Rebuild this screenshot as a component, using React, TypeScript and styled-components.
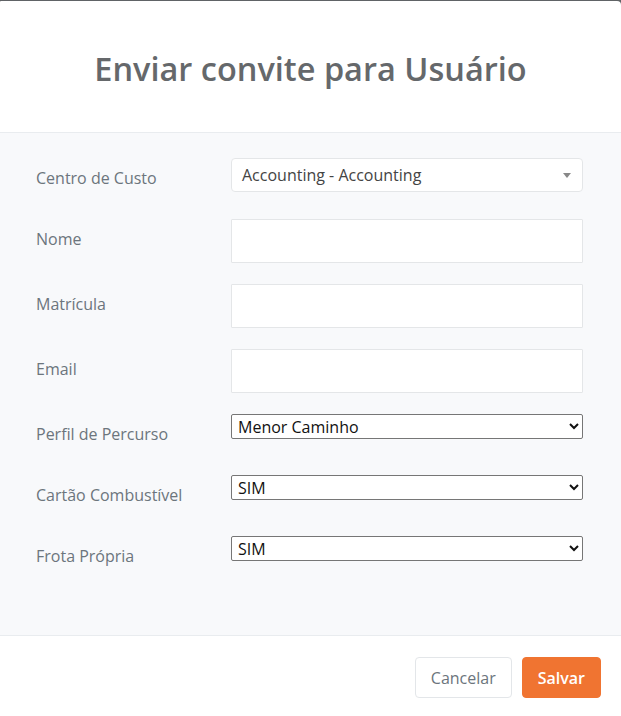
import React from "react";
import styled, { createGlobalStyle } from "styled-components";

const Global = createGlobalStyle`
  html, body { margin: 0; padding: 0; background: #606366; }
  body { font-family: "Open Sans", "Liberation Sans", sans-serif; }
  * { box-sizing: border-box; }
`;

const Modal = styled.div`
  margin-top: 1px;
  width: 621px;
  height: 715px;
  background: #ffffff;
  border-top-right-radius: 4px;
  border-top-left-radius: 1px;
  display: flex;
  flex-direction: column;
  overflow: hidden;
`;

const Header = styled.div`
  height: 132px;
  flex-shrink: 0;
  display: flex;
  align-items: center;
  justify-content: center;
  border-bottom: 1px solid #e9ecef;
  padding-top: 4px;
`;

const Title = styled.h1`
  margin: 0;
  font-size: 32.5px;
  font-weight: 600;
  color: #65686b;
  letter-spacing: 0;
`;

const Body = styled.div`
  background: #f8f9fb;
  padding: 25px 38px 37px 36px;
  display: flex;
  flex-direction: column;
  gap: 21px;
  height: 503px;
  flex-shrink: 0;
  border-bottom: 1px solid #e9ecef;
`;

const Row = styled.div`
  display: grid;
  grid-template-columns: 195px 352px;
  align-items: start;
`;

const Label = styled.label`
  font-size: 16px;
  line-height: 24px;
  padding: 8px 0 8px;
  color: #6c757d;
`;

const FakeSelect = styled.div`
  height: 34px;
  background: #fff;
  border: 1px solid #e4e6e8;
  border-radius: 4px;
  display: flex;
  align-items: center;
  justify-content: space-between;
  padding: 0 10px 0 10px;
  font-size: 16px;
  color: #444;
`;

const Caret = styled.span`
  width: 0;
  height: 0;
  border-left: 4px solid transparent;
  border-right: 4px solid transparent;
  border-top: 5px solid #888;
  margin-right: 1px;
`;

const TextInput = styled.input`
  height: 44px;
  width: 100%;
  background: #fff;
  border: 1px solid #e4e6e8;
  border-radius: 1px;
  font-family: inherit;
  font-size: 16px;
  outline: none;
`;

const NativeSelect = styled.select`
  height: 25px;
  width: 100%;
  font-family: "Open Sans", "Liberation Sans", sans-serif;
  font-size: 16px;
  color: #111;
  background: #fff;
  border: 1px solid #767676;
  border-radius: 2px;
  padding: 0 2px;
`;

const Footer = styled.div`
  flex: 1;
  display: flex;
  justify-content: flex-end;
  align-items: flex-start;
  gap: 10px;
  padding: 21px 20px 0 0;
`;

const Button = styled.button<{ $primary?: boolean }>`
  height: 41px;
  padding: 0 15px;
  font-family: inherit;
  font-size: 16px;
  border-radius: 4px;
  border: 1px solid ${(p) => (p.$primary ? "#f07431" : "#e3e6e9")};
  background: ${(p) => (p.$primary ? "#f07431" : "#fff")};
  color: ${(p) => (p.$primary ? "#fff" : "#6c757d")};
  font-weight: ${(p) => (p.$primary ? 600 : 400)};
`;

export default function App() {
  return (
    <>
      <Global />
      <Modal>
        <Header>
          <Title>Enviar convite para Usuário</Title>
        </Header>
        <Body>
          <Row>
            <Label>Centro de Custo</Label>
            <FakeSelect>
              <span>Accounting - Accounting</span>
              <Caret />
            </FakeSelect>
          </Row>
          <Row>
            <Label>Nome</Label>
            <TextInput />
          </Row>
          <Row>
            <Label>Matrícula</Label>
            <TextInput />
          </Row>
          <Row>
            <Label>Email</Label>
            <TextInput />
          </Row>
          <Row>
            <Label>Perfil de Percurso</Label>
            <NativeSelect defaultValue="Menor Caminho">
              <option>Menor Caminho</option>
            </NativeSelect>
          </Row>
          <Row>
            <Label>Cartão Combustível</Label>
            <NativeSelect defaultValue="SIM">
              <option>SIM</option>
              <option>NÃO</option>
            </NativeSelect>
          </Row>
          <Row>
            <Label>Frota Própria</Label>
            <NativeSelect defaultValue="SIM">
              <option>SIM</option>
              <option>NÃO</option>
            </NativeSelect>
          </Row>
        </Body>
        <Footer>
          <Button>Cancelar</Button>
          <Button $primary>Salvar</Button>
        </Footer>
      </Modal>
    </>
  );
}
